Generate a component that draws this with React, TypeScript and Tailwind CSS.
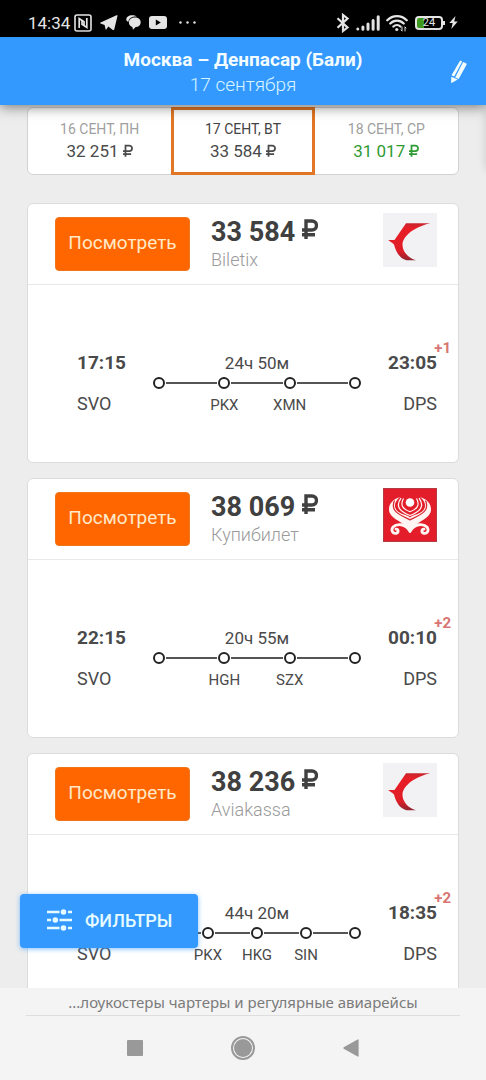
import type { ReactNode } from "react";

type Flight = {
  price: string;
  agency: string;
  logo: "swallow" | "bird";
  departure?: string;
  arrival: string;
  days: string;
  duration: string;
  stops: string[];
};

const flights: Flight[] = [
  { price: "33 584", agency: "Biletix", logo: "swallow", departure: "17:15", arrival: "23:05", days: "+1", duration: "24ч 50м", stops: ["PKX", "XMN"] },
  { price: "38 069", agency: "Купибилет", logo: "bird", departure: "22:15", arrival: "00:10", days: "+2", duration: "20ч 55м", stops: ["HGH", "SZX"] },
  { price: "38 236", agency: "Aviakassa", logo: "swallow", arrival: "18:35", days: "+2", duration: "44ч 20м", stops: ["PKX", "HKG", "SIN"] },
];

function Ruble({ bold = false }: { bold?: boolean }) {
  return (
    <svg
      viewBox="0 0 16 20"
      className={bold ? "mb-0.5 inline-block h-5 w-4 align-baseline" : "inline-block h-[13px] w-2.5 align-baseline"}
      fill="none"
      stroke="currentColor"
      strokeWidth={bold ? 3.4 : 2.8}
      role="img"
      aria-label="₽"
    >
      <path d="M4 20V2h6a4.400 4.400 0 0 1 0 9H0M0 15.800h13" />
    </svg>
  );
}

function StatusBar() {
  return (
    <div className="flex h-[37px] shrink-0 items-center bg-black pr-7 pl-7 pt-2 text-[#e6e6e6]">
      <span className="text-[17px] leading-5">14:34</span>
      <svg viewBox="0 0 18 18" className="ml-1 size-[18px]" fill="none" stroke="currentColor">
        <rect x="1" y="1" width="16" height="16" rx="2" strokeWidth="1.6" />
        <path d="M5.200 14V4.500l4.800 3.300v4M12.800 4v9.500L8 10.200v-4" strokeWidth="1.700" />
      </svg>
      <svg viewBox="0 0 18 16" className="ml-2 h-4 w-[18px]" fill="currentColor">
        <path d="M17.5.8 14.3 14.3c-.2.9-.8 1-1.5.6L8.300 11.500 6.500 14.200c-.4.500-.9.500-1-.200L4.600 10 .6 8.500c-.7-.3-.7-.8 0-1.100L16.500.3c.7-.3 1.200-.1 1 .5ZM5.600 9.600l7.800-6.100-6 7Z" />
      </svg>
      <svg viewBox="0 0 15 15" className="ml-2 size-[15px]" fill="currentColor">
        <path d="M.3 4.500C.3 2 2.800.3 6 .3c2 0 3.600.4 4.800 1.300C6.500 1.200 3 3 2.400 6.800 1.100 6.500.3 5.700.3 4.500Z" />
        <path d="M14.700 7.200c0 2.900-2.200 4.600-5 4.900L7 14.700 6.300 12C4.200 11.200 2.900 9.600 2.900 7.400 2.900 4.500 5.700 2.500 9 2.500s5.700 1.800 5.700 4.700Z" />
      </svg>
      <svg viewBox="0 0 18 13" className="ml-2 h-[13px] w-[18px]">
        <rect width="18" height="13" rx="3" fill="currentColor" />
        <path d="m6.800 3.500 5 3-5 3Z" fill="#000" />
      </svg>
      <svg viewBox="0 0 17 3" className="ml-3 h-[3px] w-[17px]" fill="currentColor">
        <circle cx="1.500" cy="1.500" r="1.200" />
        <circle cx="8.500" cy="1.500" r="1.200" />
        <circle cx="15.500" cy="1.500" r="1.200" />
      </svg>
      <svg viewBox="0 0 14 20" className="ml-auto h-5 w-3.5" fill="none" stroke="currentColor" strokeWidth="2.200">
        <path d="m1.500 5.300 10 9.200L7 18v-16l4.500 3.500-10 9.200" />
      </svg>
      <svg viewBox="0 0 24 16" className="ml-1.5 h-4 w-6" stroke="currentColor" strokeWidth="3" strokeLinecap="round">
        <path d="M1.800 13.900v.2M6.900 12v2.200M12 9v5.200M17.100 5.500v8.700M22.200 1.800v12.400" />
      </svg>
      <svg viewBox="0 0 22 18" className="ml-1.5 h-[18px] w-[22px]" fill="none" stroke="currentColor" strokeWidth="2.300" strokeLinecap="round">
        <path d="M1.300 6.200C6.700.7 15.300.7 20.700 6.200M4.300 9.500c3.800-3.800 9.600-3.800 13.400 0M7.400 12.500c2.100-1.900 5-1.900 7 0" />
        <circle cx="10.800" cy="15.500" r="1.600" fill="currentColor" stroke="none" />
        <path d="M16 13v3.500m0 .5-1-1M19 17v-3.500m0-.5 1 1" strokeWidth="1" />
      </svg>
      <span className="ml-[7px] flex h-3.5 w-7 items-center justify-center rounded border-2 border-current bg-linear-to-r from-[#3f9b20] from-30% to-black to-30% text-[11px] leading-3">24</span>
      <span className="h-1 w-0.5 bg-current" />
      <svg viewBox="0 0 9 13" className="ml-1 h-[13px] w-[9px]" fill="currentColor">
        <path d="M6.500 0 .3 7h3.400L2.300 13 8.700 5.600H5.200Z" />
      </svg>
    </div>
  );
}

function Header() {
  return (
    <header className="relative z-10 flex h-[68px] shrink-0 flex-col items-center bg-[#3399ff] pt-2.5 shadow-[0_2px_12px_rgba(0,0,0,0.5)]">
      <h1 className="text-[19px] leading-[26px] font-bold text-[#f3fdff]">Москва – Денпасар (Бали)</h1>
      <p className="text-[19px] leading-6 font-light text-[#d8f4ff]">17 сентября</p>
      <button type="button" aria-label="Изменить поиск" className="absolute top-[21px] right-3 flex h-7 w-[30px] items-center justify-center">
        <svg viewBox="0 0 18 24" className="h-6 w-[18px]" fill="#f1fcff">
          <path d="M9.700 1.200c.3-.5.800-.6 1.300-.4l1.200.6L4.200 16.500 1.500 15.300ZM13.100 1.900l2.900 1.400c.6.300.8.800.5 1.400L8.700 18.900l-3.500-1.500ZM1.300 16.700l6.500 2.900L2 22.800c-.6.300-1 .1-.9-.6Z" />
        </svg>
      </button>
    </header>
  );
}

function DateTab({ date, price, tone, active = false }: { date: string; price: string; tone: string; active?: boolean }) {
  return (
    <button
      type="button"
      aria-pressed={active}
      className={
        active
          ? "-my-px flex flex-col items-center justify-center border-3 border-[#e07626] pb-px text-[#444]"
          : "flex flex-col items-center justify-center pb-px text-[#a0a0a0]"
      }
    >
      <span className="text-[14px] leading-5">{date}</span>
      <span className={tone}>
        {price} <Ruble />
      </span>
    </button>
  );
}

function SwallowLogo() {
  return (
    <svg viewBox="0 0 54 54" className="size-[54px]">
      <defs>
        <linearGradient id="wing" x1="0" y1="0" x2="0" y2="1">
          <stop offset="0" stopColor="#c9252e" />
          <stop offset="0.150" stopColor="#e81e27" />
          <stop offset="0.750" stopColor="#df1d27" />
          <stop offset="1" stopColor="#8f2530" />
        </linearGradient>
      </defs>
      <rect width="54" height="54" fill="#f2f2f5" />
      <path d="M23 10.300h24.500C34 13 19.500 22 19.500 32c0 6.500 5.500 13 13.500 15.200H23.500C16.500 45.500 13 39 11 31.500 9 29.500 6.500 28 5 27h6.500Z" fill="url(#wing)" />
    </svg>
  );
}

function BirdLogo() {
  return (
    <svg viewBox="0 0 54 54" className="size-[54px]">
      <rect width="54" height="54" fill="#e31e2a" />
      <rect x="0.500" y="0.500" width="53" height="53" fill="none" stroke="#b43a43" />
      <path d="M17 9C8.500 11.500 4.500 18 6.500 24.500 9.500 32 21 33.500 27 43 33 33.500 44.500 32 47.500 24.500 49.500 18 45.500 11.500 37 9c5 4 6.500 9 3.500 13C37 26.500 31 26 27 29.500 23 26 17 26.500 13.500 22 10.500 18 12 13 17 9Z" fill="#fff5f3" />
      <path d="M11.500 12.500C7 23 16 26.500 27 31.800 38 26.500 47 23 42.500 12.500" fill="none" stroke="#d92a35" strokeWidth="1.300" />
      <g fill="none" stroke="#fff5f3">
        <path d="M18 10.200C11.500 19 18 24 27 27.500 36 24 42.500 19 36 10.200" strokeWidth="1.300" />
        <path d="M20.500 10.500C16.500 17.500 20.500 21.500 27 23.800c6.500-2.300 10.500-6.300 6.500-13.300" strokeWidth="1.200" />
      </g>
      <circle cx="27" cy="14.500" r="4.300" fill="#fff" />
      <path d="M27 43.500C23 35 13.500 35.500 10 39c-2.500 3.500 0 7 3.200 6.300 3-1 2-4.800-.2-4.200M27 43.500C31 35 40.500 35.500 44 39c2.500 3.500 0 7-3.200 6.300-3-1-2-4.800.2-4.200" fill="none" stroke="#fff5f3" strokeWidth="2.800" strokeLinecap="round" />
    </svg>
  );
}

function Node() {
  return <span className="size-3 rounded-full border-2 border-[#222] bg-white" />;
}

function Route({ duration, stops }: { duration: string; stops: string[] }) {
  const segments: ReactNode[] = [];
  for (let i = 0; i <= stops.length; i++) {
    segments.push(<span key={`line-${i}`} className="mx-px h-0.5 flex-1 bg-[#555]" />, <Node key={`node-${i}`} />);
  }
  return (
    <div>
      <p className="text-center text-[17px] leading-6">{duration}</p>
      <div className="mt-0.5 flex items-center">
        <Node />
        {segments}
      </div>
      <ul className="mx-1.5 mt-1.5 flex justify-center text-[15px] leading-5">
        {stops.map((stop) => (
          <li key={stop} className="text-center" style={{ width: `${100 / (stops.length + 1)}%` }}>
            {stop}
          </li>
        ))}
      </ul>
    </div>
  );
}

function FlightCard({ flight }: { flight: Flight }) {
  return (
    <article className="rounded-md border border-[#dcdcdc] bg-white text-[#4a4a4a]">
      <div className="flex h-[81px] items-center border-b border-[#e8e8e8] pr-[21px] pb-px pl-[27px]">
        <button type="button" className="h-[54px] w-[135px] rounded-sm border border-[#f0761c] bg-[#ff6600] text-[19px] text-[#ffe9c8]">
          Посмотреть
        </button>
        <div className="ml-[21px] flex-1">
          <p className="text-[27px] leading-8 font-bold text-[#404040]">
            {flight.price} <Ruble bold />
          </p>
          <p className="text-[18px] leading-6 font-light text-[#9a9a9a]">{flight.agency}</p>
        </div>
        <div className="pb-2">{flight.logo === "swallow" ? <SwallowLogo /> : <BirdLogo />}</div>
      </div>
      <div className="grid grid-cols-[76px_1fr_76px] pt-[66px] pr-[21px] pb-[46px] pl-[49px]">
        <div className="flex flex-col gap-[17px] text-[18px] leading-6">
          <span className="h-6 text-[19px] font-bold">{flight.departure}</span>
          <span>SVO</span>
        </div>
        <Route duration={flight.duration} stops={flight.stops} />
        <div className="relative flex flex-col gap-[17px] text-right text-[18px] leading-6">
          <span className="absolute -top-3 -right-3.5 text-[15px] leading-[18px] font-bold text-[#d87572]">{flight.days}</span>
          <span className="text-[19px] font-bold">{flight.arrival}</span>
          <span>DPS</span>
        </div>
      </div>
    </article>
  );
}

function Footer() {
  return (
    <footer className="shrink-0 bg-[#f4f4f4] text-[#7b7b7b]">
      <p className="mx-[26px] h-7 border-b border-[#dedede] text-center font-['Noto_Sans',sans-serif] text-[15px] leading-7">
        ...лоукостеры чартеры и регулярные авиарейсы
      </p>
      <nav className="flex h-16 items-center justify-center gap-[84px] text-[#999]">
        <button type="button" aria-label="Недавние" className="flex size-6 items-center justify-center">
          <span className="size-4 rounded-[1px] bg-current" />
        </button>
        <button type="button" aria-label="Домой" className="flex size-6 items-center justify-center rounded-full border-2 border-current">
          <span className="size-[18px] rounded-full bg-current" />
        </button>
        <button type="button" aria-label="Назад" className="flex size-6 items-center justify-center">
          <svg viewBox="0 0 16 18" className="h-[18px] w-4" fill="currentColor">
            <path d="M.7 8.300 14.600.4c.6-.3 1 0 1 .6v16c0 .6-.4.900-1 .6L.7 9.700c-.5-.3-.5-1 0-1.400Z" />
          </svg>
        </button>
      </nav>
    </footer>
  );
}

export default function App() {
  return (
    <div className="flex h-screen flex-col overflow-hidden bg-[#ededed] font-[Roboto,sans-serif]">
      <StatusBar />
      <Header />
      <div className="relative min-h-0 flex-1">
        <main className="h-full overflow-y-auto px-[27px] pt-0.5 [scrollbar-width:none]">
          <div className="grid h-[68px] grid-cols-3 rounded-md border border-[#d2d2d2] bg-white">
            <DateTab date="16 СЕНТ, ПН" price="32 251" tone="text-[17px] leading-6 text-[#4a4a4a]" />
            <DateTab date="17 СЕНТ, ВТ" price="33 584" tone="text-[17px] leading-6 text-[#4a4a4a]" active />
            <DateTab date="18 СЕНТ, СР" price="31 017" tone="text-[17px] leading-6 text-[#2f9a33]" />
          </div>
          <div className="mt-7 flex flex-col gap-[15px]">
            {flights.map((flight) => (
              <FlightCard key={flight.price} flight={flight} />
            ))}
          </div>
        </main>
        <div className="absolute top-0 -right-4 h-16 w-4 shadow-[0_0_10px_rgba(0,0,0,0.15)]" />
        <button type="button" className="absolute bottom-10 left-5 flex h-[54px] w-[178px] items-center rounded-sm bg-[#3399ff] pb-0.5 pl-[27px] text-[18px] font-medium text-[#e6fbff] shadow-[0_1px_5px_rgba(51,153,255,0.6)]">
          <svg viewBox="0 0 25 22" className="mr-[13px] h-[22px] w-[25px]" fill="currentColor" stroke="currentColor" strokeWidth="2.400">
            <path d="M0 3h12.500M21 3h4M0 11h4M12.500 11H25M0 19h12.500M21 19h4" />
            <g stroke="none">
              <circle cx="16.500" cy="3" r="2.800" />
              <circle cx="8.300" cy="11" r="2.800" />
              <circle cx="16.500" cy="19" r="2.800" />
            </g>
          </svg>
          ФИЛЬТРЫ
        </button>
      </div>
      <Footer />
    </div>
  );
}
